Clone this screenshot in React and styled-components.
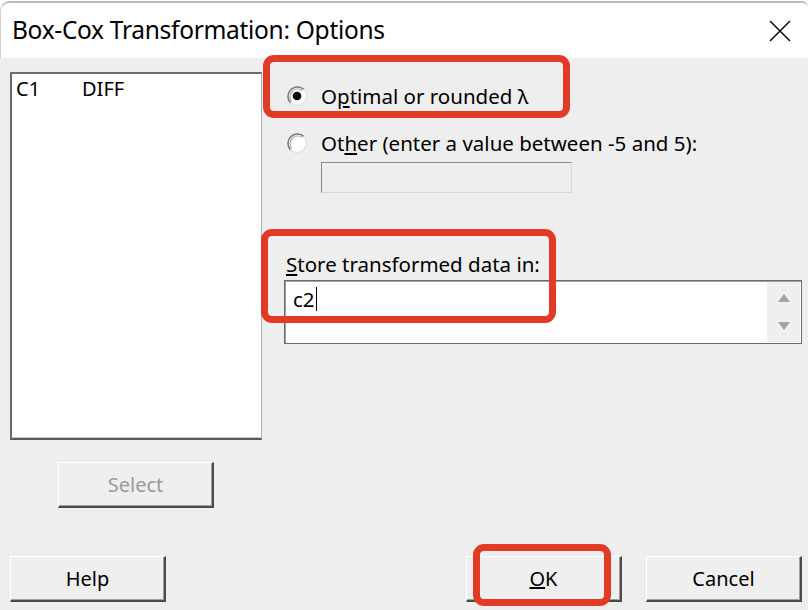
import React from "react";
import styled, { createGlobalStyle } from "styled-components";

const GlobalStyle = createGlobalStyle`
  html, body {
    margin: 0;
    padding: 0;
    background: #ffffff;
  }
  body {
    font-family: "Noto Sans", "Open Sans", sans-serif;
  }
`;

const RadioIcon = ({ checked }) => (
  <svg width="22" height="22" viewBox="0 0 22 22">
    <circle cx="11" cy="11" r="9.5" fill="#ffffff" stroke="#e3e3e3" strokeWidth="1.5" />
    <path d="M4.3 17.7 A9.5 9.5 0 0 1 17.7 4.3" fill="none" stroke="#7a7a7a" strokeWidth="1.5" />
    <path d="M5.6 16.4 A7.7 7.7 0 0 1 16.4 5.6" fill="none" stroke="#a8a8a8" strokeWidth="1.2" />
    {checked && <circle cx="11" cy="11" r="4.3" fill="#000000" />}
  </svg>
);

const App = () => {
  return (
    <>
      <GlobalStyle />
      <Window>
        <TitleBar>
          <Title>Box-Cox Transformation: Options</Title>
          <CloseIcon width="22" height="22" viewBox="0 0 22 22">
            <path d="M1 1 L21 21 M21 1 L1 21" stroke="#111" strokeWidth="1.6" />
          </CloseIcon>
        </TitleBar>
        <Body>
          <Main>
            <LeftColumn>
              <ListBox>
                <ListRow>
                  <ColName>C1</ColName>
                  <span>DIFF</span>
                </ListRow>
              </ListBox>
              <SelectButton disabled>Select</SelectButton>
            </LeftColumn>
            <RightColumn>
              <RadioRow $top={12}>
                <RadioIcon checked />
                <Label>
                  O<u>p</u>timal or rounded λ
                </Label>
              </RadioRow>
              <RadioRow $top={23}>
                <RadioIcon />
                <Label>
                  Ot<u>h</u>er (enter a value between -5 and 5):
                </Label>
              </RadioRow>
              <DisabledInput />
              <FieldLabel>
                <u>S</u>tore transformed data in:
              </FieldLabel>
              <TextArea>
                <TextValue>
                  c2<Caret />
                </TextValue>
                <ScrollStrip>
                  <Arrow viewBox="0 0 12 8">
                    <path d="M6 0 L12 8 L0 8 Z" fill="#a3a3a3" />
                  </Arrow>
                  <Arrow viewBox="0 0 12 8">
                    <path d="M0 0 L12 0 L6 8 Z" fill="#a3a3a3" />
                  </Arrow>
                </ScrollStrip>
              </TextArea>
            </RightColumn>
          </Main>
          <Footer>
            <Button>Help</Button>
            <FooterRight>
              <Button>
                <u>O</u>K
              </Button>
              <Button>Cancel</Button>
            </FooterRight>
          </Footer>
          <Highlight $x={263} $y={-3} $w={307} $h={63} />
          <Highlight $x={261} $y={171} $w={295} $h={94} />
          <Highlight $x={473} $y={486} $w={138} $h={62} />
        </Body>
      </Window>
    </>
  );
};

export default App;

const Window = styled.div`
  width: 808px;
  height: 610px;
  display: flex;
  flex-direction: column;
  overflow: hidden;
  color: #000;
`;

const TitleBar = styled.div`
  height: 57px;
  flex: 0 0 auto;
  background: #ffffff;
  border-top: 2px solid #b9b9b9;
  border-left: 1px solid #d0d0d0;
  border-top-left-radius: 10px;
  border-top-right-radius: 6px;
  display: flex;
  align-items: center;
  justify-content: space-between;
  padding: 0 17px 0 11px;
  box-sizing: border-box;
  margin-top: 1px;
`;

const Title = styled.div`
  font-size: 24.5px;
  letter-spacing: -0.3px;
  padding-bottom: 2px;
`;

const CloseIcon = styled.svg`
  display: block;
`;

const Body = styled.div`
  position: relative;
  flex: 1;
  background: #eeeeee;
  display: flex;
  flex-direction: column;
  justify-content: space-between;
  padding: 14px 6px 8px 10px;
  box-sizing: border-box;
`;

const Main = styled.div`
  display: grid;
  grid-template-columns: 252px 1fr;
  column-gap: 23px;
`;

const LeftColumn = styled.div`
  display: flex;
  flex-direction: column;
  align-items: flex-start;
`;

const ListBox = styled.div`
  width: 252px;
  height: 368px;
  box-sizing: border-box;
  background: #ffffff;
  border-top: 2px solid #6d6d6d;
  border-left: 2px solid #6d6d6d;
  border-right: 1px solid #b0b0b0;
  border-bottom: 2px solid #5a5a5a;
  box-shadow: inset 0 -1px 0 #c8c8c8;
  padding: 3px 4px;
`;

const ListRow = styled.div`
  display: flex;
  font-size: 20px;
  line-height: 24px;
`;

const ColName = styled.span`
  width: 66px;
`;

const Button = styled.button`
  width: 156px;
  height: 46px;
  box-sizing: border-box;
  background: #efefef;
  border: none;
  border-top: 1px solid #ffffff;
  border-left: 1px solid #ffffff;
  border-right: 2px solid #4a4a4a;
  border-bottom: 2px solid #4a4a4a;
  box-shadow: inset -1px -1px 0 #a0a0a0;
  font-family: "Noto Sans", "Open Sans", sans-serif;
  font-size: 20px;
  color: #000;
  padding: 0;
`;

const SelectButton = styled(Button)`
  margin-top: 22px;
  margin-left: 48px;
  color: #9a9a9a;
`;

const RightColumn = styled.div`
  display: flex;
  flex-direction: column;
  align-items: flex-start;
`;

const RadioRow = styled.div`
  display: flex;
  align-items: center;
  gap: 13px;
  margin-top: ${(p) => p.$top}px;
  margin-left: 1px;
  height: 24px;
`;

const Label = styled.span`
  font-size: 20.5px;
  white-space: nowrap;
`;

const DisabledInput = styled.div`
  width: 251px;
  height: 31px;
  box-sizing: border-box;
  margin-top: 7px;
  margin-left: 36px;
  border-top: 1px solid #8a8a8a;
  border-left: 1px solid #8a8a8a;
  border-right: 1px solid #d8d8d8;
  border-bottom: 1px solid #d8d8d8;
  background: #eeeeee;
`;

const FieldLabel = styled.div`
  margin-top: 59px;
  margin-left: 1px;
  font-size: 20.5px;
  line-height: 24px;
`;

const TextArea = styled.div`
  margin-top: 4px;
  margin-left: -1px;
  width: 518px;
  height: 64px;
  box-sizing: border-box;
  background: #ffffff;
  border: 1px solid #6a6a6a;
  box-shadow: inset 1px 1px 0 #a0a0a0;
  display: flex;
`;

const TextValue = styled.div`
  flex: 1;
  font-size: 20.5px;
  padding: 5px 0 0 8px;
  line-height: 26px;
  display: flex;
  align-items: center;
  align-self: flex-start;
`;

const Caret = styled.span`
  display: inline-block;
  width: 1px;
  height: 24px;
  background: #000;
  margin-left: 1px;
`;

const ScrollStrip = styled.div`
  width: 33px;
  background: #efefef;
  display: flex;
  flex-direction: column;
  align-items: center;
  justify-content: space-between;
  padding: 12px 0 12px;
  box-sizing: border-box;
  margin: 1px 1px 1px 0;
`;

const Arrow = styled.svg`
  width: 12px;
  height: 8px;
  display: block;
`;

const Footer = styled.div`
  display: flex;
  justify-content: space-between;
  align-items: flex-end;
`;

const FooterRight = styled.div`
  display: flex;
  gap: 24px;
`;

const Highlight = styled.div`
  position: absolute;
  left: ${(p) => p.$x}px;
  top: ${(p) => p.$y}px;
  width: ${(p) => p.$w}px;
  height: ${(p) => p.$h}px;
  box-sizing: border-box;
  border: 7px solid #e33a25;
  border-radius: 11px;
  pointer-events: none;
`;
